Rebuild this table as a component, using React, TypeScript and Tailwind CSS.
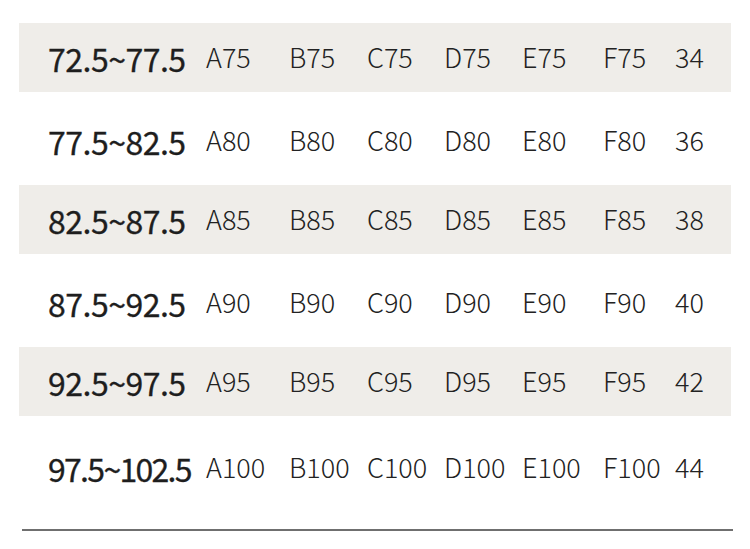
import React from "react";

const rows = [
  { r: "72.5~77.5", s: ["A75", "B75", "C75", "D75", "E75", "F75"], n: "34", shade: true },
  { r: "77.5~82.5", s: ["A80", "B80", "C80", "D80", "E80", "F80"], n: "36", shade: false },
  { r: "82.5~87.5", s: ["A85", "B85", "C85", "D85", "E85", "F85"], n: "38", shade: true },
  { r: "87.5~92.5", s: ["A90", "B90", "C90", "D90", "E90", "F90"], n: "40", shade: false },
  { r: "92.5~97.5", s: ["A95", "B95", "C95", "D95", "E95", "F95"], n: "42", shade: true },
  { r: "97.5~102.5", s: ["A100", "B100", "C100", "D100", "E100", "F100"], n: "44", shade: false },
];

export default function App() {
  return (
    <div
      className="w-[750px] h-[549px] bg-white pt-[23px] overflow-hidden"
      style={{ fontFamily: '"Noto Sans CJK SC", "Noto Sans", sans-serif' }}
    >
      <div className="mx-[19px] w-[712px]">
        {rows.map((row, i) => (
          <div
            key={i}
            className={
              row.shade
                ? "flex items-center h-[69px] bg-[#efede9] text-[#222]"
                : i === 5
                ? "flex items-center h-[101px] pt-[2px] bg-white text-[#222]"
                : "flex items-center h-[93px] pt-[4px] bg-white text-[#222]"
            }
          >
            <div
              className={
                i === 5
                  ? "w-[187px] pl-[29px] text-[32px] font-normal tracking-[-1.7px] text-[#1e1e1e] whitespace-nowrap [-webkit-text-stroke:0.3px_#1e1e1e]"
                  : "w-[187px] pl-[29px] text-[32px] font-normal tracking-[-0.5px] text-[#1e1e1e] whitespace-nowrap [-webkit-text-stroke:0.3px_#1e1e1e]"
              }
            >
              {row.r}
            </div>
            <div className="w-[83px] text-[27px] font-light whitespace-nowrap">{row.s[0]}</div>
            <div className="w-[78px] text-[27px] font-light whitespace-nowrap">{row.s[1]}</div>
            <div className="w-[77px] text-[27px] font-light whitespace-nowrap">{row.s[2]}</div>
            <div className="w-[78px] text-[27px] font-light whitespace-nowrap">{row.s[3]}</div>
            <div className="w-[81px] text-[27px] font-light whitespace-nowrap">{row.s[4]}</div>
            <div className="w-[72px] text-[27px] font-light whitespace-nowrap">{row.s[5]}</div>
            <div className="text-[27px] font-light whitespace-nowrap">{row.n}</div>
          </div>
        ))}
        <div className="mt-[12px] ml-[3px] w-[711px] h-[2px] bg-[#6f6f6f]" />
      </div>
    </div>
  );
}
